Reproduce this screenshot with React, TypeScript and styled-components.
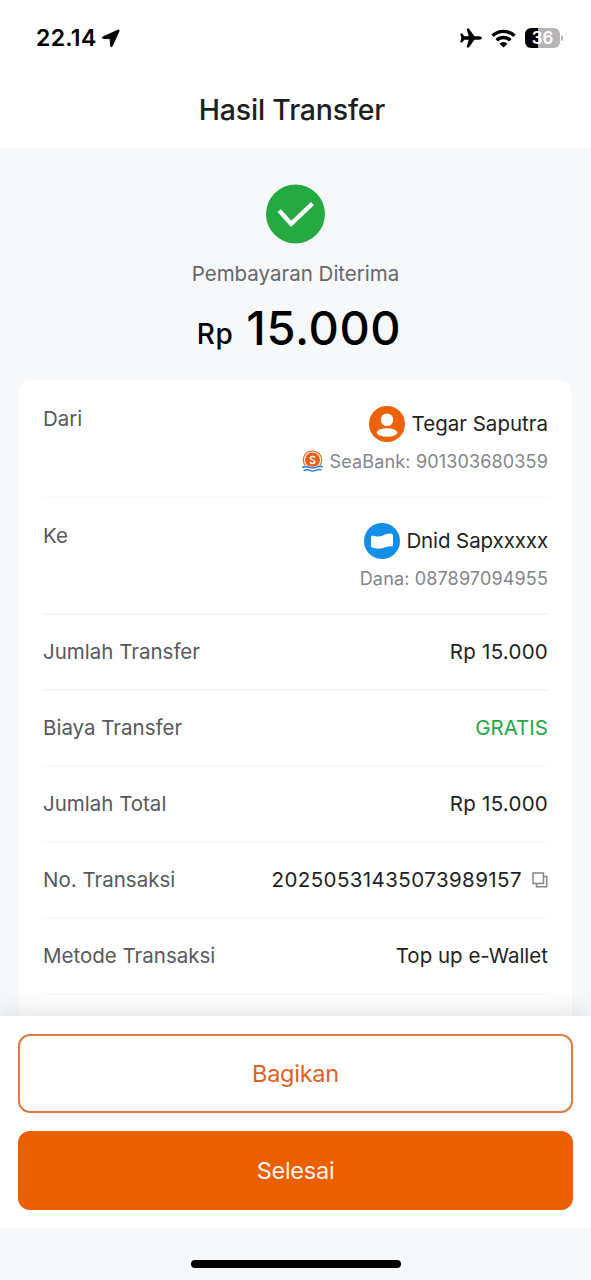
import React from "react";
import styled, { createGlobalStyle } from "styled-components";

const GlobalStyle = createGlobalStyle`
  * { box-sizing: border-box; }
  body {
    margin: 0;
    background: #f6f8fa;
    font-family: Inter, "Liberation Sans", sans-serif;
    -webkit-font-smoothing: antialiased;
  }
  svg { flex: none; }
`;

const Screen = styled.div`
  display: flex;
  flex-direction: column;
  width: 591px;
  height: 1280px;
  overflow: hidden;
  background: #f6f8fa;
`;

const StatusBar = styled.header`
  display: flex;
  justify-content: space-between;
  align-items: center;
  flex: none;
  height: 76px;
  padding: 0 28px 0 36px;
  background: #fff;
`;

const Clock = styled.div`
  display: flex;
  align-items: center;
  gap: 4px;
  font-size: 23px;
  font-weight: 600;
  line-height: 28px;
  letter-spacing: 0.3px;
  color: #000;
`;

const StatusIcons = styled.div`
  display: flex;
  align-items: center;
  gap: 9px;
`;

const Battery = styled.div`
  display: flex;
  align-items: center;
  gap: 1px;
`;

const BatteryBody = styled.div<{ $level: number }>`
  width: 35px;
  height: 20px;
  border-radius: 6px;
  background: linear-gradient(to right, #000 ${(p) => p.$level}%, #b5b5b5 ${(p) => p.$level}%);
  color: #fff;
  font-size: 17px;
  font-weight: 600;
  line-height: 20px;
  text-align: center;
`;

const BatteryTip = styled.div`
  width: 2px;
  height: 6px;
  border-radius: 0 2px 2px 0;
  background: #b5b5b5;
`;

const TitleBar = styled.h1`
  flex: none;
  height: 72px;
  margin: 0;
  padding-right: 7px;
  background: #fff;
  color: #1f1f1f;
  font-size: 28.5px;
  font-weight: 500;
  line-height: 67px;
  text-align: center;
  letter-spacing: -0.2px;
`;

const Content = styled.main`
  display: flex;
  flex-direction: column;
  align-items: center;
  flex: 1;
  min-height: 0;
  padding: 36px 19px 0 19px;
  overflow: hidden;
`;

const StatusText = styled.p`
  flex: none;
  margin: 17px 0 0;
  color: #66676b;
  font-size: 20.5px;
  line-height: 26px;
`;

const Amount = styled.div`
  display: flex;
  flex: none;
  align-items: baseline;
  gap: 13px;
  height: 60px;
  margin: 11px 0 22px 7px;
  color: #000;
  font-size: 47px;
  font-weight: 500;
  line-height: 60px;
  letter-spacing: 0.6px;
`;

const Currency = styled.span`
  margin-bottom: 1px;
  font-size: 28px;
  transform: translateY(-1px);
`;

const Card = styled.section`
  align-self: stretch;
  flex: none;
  padding: 0 24px;
  border-radius: 12px;
  background: #fff;
`;

const Row = styled.div<{ $tall?: boolean; $line?: string }>`
  display: flex;
  justify-content: space-between;
  align-items: ${(p) => (p.$tall ? "flex-start" : "center")};
  height: ${(p) => (p.$tall ? "117.5px" : "76px")};
  padding-top: ${(p) => (p.$tall ? "19.5px" : "0")};
  border-bottom: 2px solid ${(p) => p.$line ?? "#fafafa"};
`;

const Label = styled.span`
  color: #58595c;
  font-size: 20.5px;
  line-height: 38px;
`;

const Value = styled.span<{ $green?: boolean; $spacing?: number }>`
  display: flex;
  align-items: center;
  gap: 10px;
  color: ${(p) => (p.$green ? "#27a745" : "#1f1f1f")};
  font-size: 20.5px;
  line-height: 38px;
  letter-spacing: ${(p) => p.$spacing ?? 0}px;
`;

const Party = styled.div`
  display: flex;
  flex-direction: column;
  align-items: flex-end;
  padding-top: 6px;
`;

const PartyName = styled.div<{ $tight?: boolean }>`
  display: flex;
  align-items: center;
  gap: ${(p) => (p.$tight ? "6px" : "7px")};
  height: 36px;
  color: #1f1f1f;
  font-size: 20.5px;
  line-height: 36px;
  letter-spacing: ${(p) => (p.$tight ? "-0.1px" : "0")};
`;

const PartyAccount = styled.div`
  display: flex;
  align-items: flex-start;
  gap: 7px;
  height: 24px;
  margin-top: 8px;
  color: #85868a;
  font-size: 18px;
  line-height: 24px;
  letter-spacing: 0.15px;
`;

const Footer = styled.footer`
  position: relative;
  display: flex;
  flex-direction: column;
  flex: none;
  gap: 18px;
  height: 212px;
  padding: 18px;
  background: #fff;
  box-shadow: 0 -2px 26px rgba(0, 0, 0, 0.13);
`;

const Button = styled.button<{ $primary?: boolean }>`
  height: 79px;
  padding: 0;
  border: ${(p) => (p.$primary ? "0" : "2px solid #e07a40")};
  border-radius: 12px;
  background: ${(p) => (p.$primary ? "#ea5f00" : "#fff")};
  color: ${(p) => (p.$primary ? "#fff3e8" : "#dc621c")};
  font-family: inherit;
  font-size: 23.5px;
  letter-spacing: -0.25px;
`;

const HomeArea = styled.div`
  position: relative;
  display: flex;
  justify-content: center;
  flex: none;
  height: 52px;
  padding-top: 32px;
  background: #f6f8fa;
`;

const HomeIndicator = styled.div`
  width: 210px;
  height: 8px;
  border-radius: 4px;
  background: #000;
`;

const LocationIcon = () => (
  <svg width="19" height="19" viewBox="0 0 19 19">
    <path d="M17.2 1 L1.6 8 Q0.6 9 2 9.4 L9.2 9.7 L9.5 17 Q10.2 18.6 11.2 17.2 L18.1 2 Q18.4 0.6 17.2 1Z" fill="#000" stroke="#000" strokeWidth="0.9" strokeLinejoin="round" />
  </svg>
);

const PlaneIcon = () => (
  <svg width="22" height="20" viewBox="0 0 22 20">
    <path d="M21.8 10c0-1-1.2-1.7-2.6-1.7h-4.8L9.2.9C9 .6 8.7.5 8.4.5H7.2c-.4 0-.6.3-.5.7l2 7.1H4.4L2.5 5.9C2.3 5.6 2 5.5 1.7 5.5H.9c-.4 0-.6.3-.5.7L1.3 10 .4 13.8c-.1.4.1.7.5.7h.8c.3 0 .6-.1.8-.4l1.9-2.4h4.3l-2 7.1c-.1.4.1.7.5.7h1.2c.3 0 .6-.1.8-.4l5.2-7.4h4.8c1.4 0 2.6-.7 2.6-1.7z" fill="#000" />
  </svg>
);

const WifiIcon = () => (
  <svg width="25" height="19" viewBox="0 0 25 19">
    <g fill="none" stroke="#000" strokeWidth="3.4">
      <path d="M1.5 6.8 A16 16 0 0 1 23.5 6.8" />
      <path d="M5.6 11.2 A10 10 0 0 1 19.4 11.2" />
    </g>
    <path d="M12.5 18.6 L8.5 14.7 A5.7 5.7 0 0 1 16.5 14.7 Z" fill="#000" />
  </svg>
);

const SuccessIcon = () => (
  <svg width="60" height="60" viewBox="0 0 60 60">
    <circle cx="29.5" cy="30" r="29.5" fill="#25aa42" />
    <path d="M13.2 26.6 L25.1 39.8 L46.5 19.5" fill="none" stroke="#fff" strokeWidth="4.4" />
  </svg>
);

const PersonAvatar = () => (
  <svg width="36" height="36" viewBox="0 0 36 36">
    <circle cx="18" cy="18" r="18" fill="#ec620b" />
    <circle cx="18" cy="13.8" r="6.3" fill="#fff" />
    <ellipse cx="18" cy="26.5" rx="10.3" ry="4.3" fill="#fff" />
  </svg>
);

const DanaAvatar = () => (
  <svg width="36" height="36" viewBox="0 0 36 36">
    <circle cx="18" cy="18" r="18" fill="#148fe8" />
    <path d="M7 14 Q7.2 12.4 8.6 12.4 C13 13.6 15.500 13.800 19 12.400 C22 11 25 10.200 27.600 10.700 Q29 11 29 12.500 V22 Q29 23.700 27.500 23.400 C24 22.900 22 24.300 18.500 25.200 C14 26 12 25.600 8.600 24.800 Q7 24.500 7 23Z" fill="#fff" />
  </svg>
);

const SeaBankLogo = () => (
  <svg width="21" height="22" viewBox="0 0 21 22">
    <circle cx="10.5" cy="10" r="9.2" fill="#fff" stroke="#e5733b" strokeWidth="1.3" />
    <circle cx="10.5" cy="10" r="7.5" fill="#e8611c" />
    <path d="M13 7.4 C11.5 6 8.2 6.2 8.3 8.2 C8.4 10.2 12.8 9.6 12.8 11.8 C12.8 13.8 9.5 13.9 7.9 12.4" fill="none" stroke="#fff" strokeWidth="1.5" />
    <path d="M0 15.800 Q3.500 14.500 7 16 T14 16 T21 15.600 V22 H0Z" fill="#fff" />
    <path d="M0 17.500 Q3.500 15.800 7 17.300 T14 17.300 T21 16.800 M1.500 20.500 Q4.500 19 7.500 20.300 T14 20.300 T19.500 20" fill="none" stroke="#3f7fd6" strokeWidth="1.6" />
  </svg>
);

const CopyIcon = () => (
  <svg width="16" height="16" viewBox="0 0 16 16" fill="none" stroke="#858585" strokeWidth="1.5">
    <rect x="1" y="1" width="10.5" height="10.5" />
    <path d="M12 4.5 H14.7 V14.7 H4.5 V12" />
  </svg>
);

export default function App() {
  return (
    <>
      <GlobalStyle />
      <Screen>
        <StatusBar>
          <Clock>
            22.14
            <LocationIcon />
          </Clock>
          <StatusIcons>
            <PlaneIcon />
            <WifiIcon />
            <Battery>
              <BatteryBody $level={36}>36</BatteryBody>
              <BatteryTip />
            </Battery>
          </StatusIcons>
        </StatusBar>
        <TitleBar>Hasil Transfer</TitleBar>
        <Content>
          <SuccessIcon />
          <StatusText>Pembayaran Diterima</StatusText>
          <Amount>
            <Currency>Rp</Currency>15.000
          </Amount>
          <Card>
            <Row $tall>
              <Label>Dari</Label>
              <Party>
                <PartyName>
                  <PersonAvatar />
                  Tegar Saputra
                </PartyName>
                <PartyAccount>
                  <SeaBankLogo />
                  SeaBank: 901303680359
                </PartyAccount>
              </Party>
            </Row>
            <Row $tall $line="#f3f4f4">
              <Label>Ke</Label>
              <Party>
                <PartyName $tight>
                  <DanaAvatar />
                  Dnid Sapxxxxx
                </PartyName>
                <PartyAccount>Dana: 087897094955</PartyAccount>
              </Party>
            </Row>
            <Row $line="#f3f4f4">
              <Label>Jumlah Transfer</Label>
              <Value $spacing={0.25}>Rp 15.000</Value>
            </Row>
            <Row>
              <Label>Biaya Transfer</Label>
              <Value $green>GRATIS</Value>
            </Row>
            <Row>
              <Label>Jumlah Total</Label>
              <Value $spacing={0.25}>Rp 15.000</Value>
            </Row>
            <Row>
              <Label>No. Transaksi</Label>
              <Value $spacing={0.42}>
                20250531435073989157
                <CopyIcon />
              </Value>
            </Row>
            <Row>
              <Label>Metode Transaksi</Label>
              <Value>Top up e-Wallet</Value>
            </Row>
            <Row />
          </Card>
        </Content>
        <Footer>
          <Button>Bagikan</Button>
          <Button $primary>Selesai</Button>
        </Footer>
        <HomeArea>
          <HomeIndicator />
        </HomeArea>
      </Screen>
    </>
  );
}
